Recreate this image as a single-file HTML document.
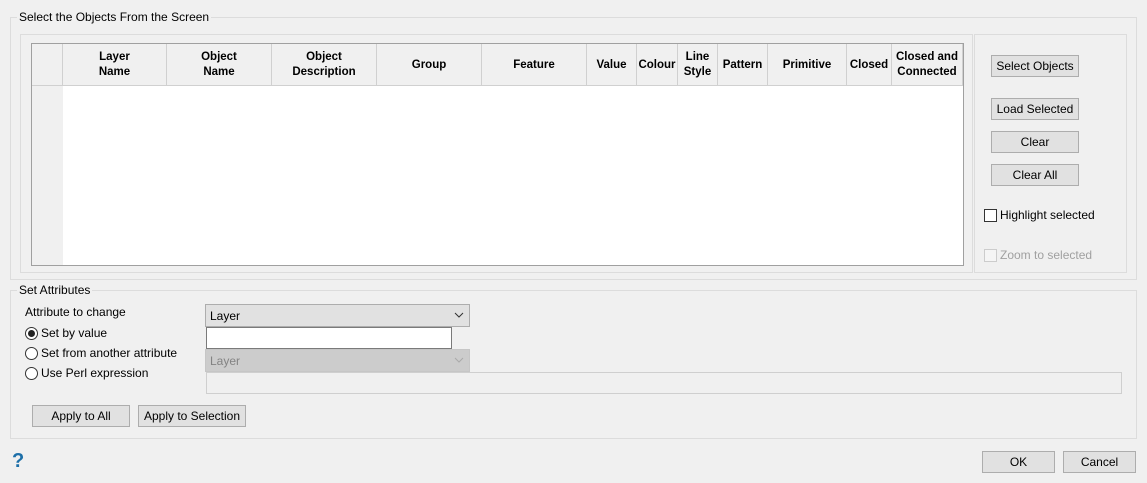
<!DOCTYPE html>
<html><head><meta charset="utf-8"><style>
*{box-sizing:border-box;margin:0;padding:0}
body{width:1147px;height:483px;background:#f0f0f0;font-family:"Liberation Sans",sans-serif;font-size:12px;color:#000;position:relative;overflow:hidden}
.a{position:absolute}
.gb{position:absolute;border:1px solid #dcdcdc}
.lg{position:absolute;background:#f0f0f0;padding:0 2px;white-space:nowrap}
.btn{position:absolute;background:#e1e1e1;border:1px solid #adadad;text-align:center;line-height:20px;white-space:nowrap}
.hd{position:absolute;top:0;height:42px;border-right:1px solid #d0d0d0;font-weight:bold;display:flex;align-items:center;justify-content:center;text-align:center;line-height:15px;font-size:11.5px}
.rb{position:absolute;width:13px;height:13px;border:1px solid #333;border-radius:50%;background:#fff}
.chev{position:absolute;right:5px;top:7px}
</style></head><body>
<div class="gb" style="left:10px;top:17px;width:1127px;height:263px"></div>
<div class="lg" style="left:17px;top:10px">Select the Objects From the Screen</div>
<div class="gb" style="left:20px;top:34px;width:953px;height:239px"></div>
<div class="gb" style="left:974px;top:34px;width:153px;height:239px"></div>
<div class="a" style="left:31px;top:43px;width:933px;height:223px;background:#fff;border:1px solid #a0a0a0">
 <div class="a" style="left:0;top:0;width:31px;height:221px;background:#f0f0f0"></div>
 <div class="a" style="left:0;top:0;width:931px;height:42px;background:#f0f0f0;border-bottom:1px solid #d0d0d0"></div>
 <div class="hd" style="left:0;width:31px"></div>
 <div class="hd" style="left:31px;width:104px">Layer<br>Name</div>
 <div class="hd" style="left:135px;width:105px">Object<br>Name</div>
 <div class="hd" style="left:240px;width:105px">Object<br>Description</div>
 <div class="hd" style="left:345px;width:105px">Group</div>
 <div class="hd" style="left:450px;width:105px">Feature</div>
 <div class="hd" style="left:555px;width:50px">Value</div>
 <div class="hd" style="left:605px;width:41px">Colour</div>
 <div class="hd" style="left:646px;width:40px">Line<br>Style</div>
 <div class="hd" style="left:686px;width:50px">Pattern</div>
 <div class="hd" style="left:736px;width:79px">Primitive</div>
 <div class="hd" style="left:815px;width:45px">Closed</div>
 <div class="hd" style="left:860px;width:71px">Closed and<br>Connected</div>
</div>
<div class="btn" style="left:991px;top:55px;width:88px">Select Objects</div>
<div class="btn" style="left:991px;top:98px;width:88px">Load Selected</div>
<div class="btn" style="left:991px;top:131px;width:88px">Clear</div>
<div class="btn" style="left:991px;top:164px;width:88px">Clear All</div>
<div class="a" style="left:984px;top:209px;width:13px;height:13px;border:1px solid #333;background:#fff"></div>
<div class="a" style="left:1000px;top:208px">Highlight selected</div>
<div class="a" style="left:984px;top:249px;width:13px;height:13px;border:1px solid #ccc;background:#f5f5f5"></div>
<div class="a" style="left:1000px;top:248px;color:#a0a0a0">Zoom to selected</div>

<div class="gb" style="left:10px;top:290px;width:1127px;height:149px"></div>
<div class="lg" style="left:17px;top:283px">Set Attributes</div>
<div class="a" style="left:25px;top:305px">Attribute to change</div>
<div class="a" style="left:205px;top:304px;width:265px;height:23px;background:#e1e1e1;border:1px solid #adadad;padding:4px 4px">Layer<svg class="chev" width="10" height="6"><path d="M1 1L5 5L9 1" fill="none" stroke="#333" stroke-width="1"/></svg></div>
<div class="a" style="left:206px;top:327px;width:246px;height:22px;background:#fff;border:1px solid #7a7a7a"></div>
<div class="a" style="left:205px;top:349px;width:265px;height:23px;background:#cccccc;border:1px solid #c6c6c6;padding:4px 4px;color:#838383">Layer<svg class="chev" width="10" height="6"><path d="M1 1L5 5L9 1" fill="none" stroke="#aaa" stroke-width="1"/></svg></div>
<div class="a" style="left:206px;top:372px;width:916px;height:22px;background:#f0f0f0;border:1px solid #cfcfcf"></div>
<div class="rb" style="left:25px;top:327px"></div><div class="a" style="left:28px;top:330px;width:7px;height:7px;border-radius:50%;background:#222"></div>
<div class="a" style="left:41px;top:326px">Set by value</div>
<div class="rb" style="left:25px;top:347px"></div>
<div class="a" style="left:41px;top:346px">Set from another attribute</div>
<div class="rb" style="left:25px;top:367px"></div>
<div class="a" style="left:41px;top:366px">Use Perl expression</div>
<div class="btn" style="left:32px;top:405px;width:98px">Apply to All</div>
<div class="btn" style="left:138px;top:405px;width:108px">Apply to Selection</div>

<div class="a" style="left:12px;top:450px;font-size:20px;font-weight:bold;color:#1d6fa8">?</div>
<div class="btn" style="left:982px;top:451px;width:73px">OK</div>
<div class="btn" style="left:1063px;top:451px;width:73px">Cancel</div>
</body></html>
